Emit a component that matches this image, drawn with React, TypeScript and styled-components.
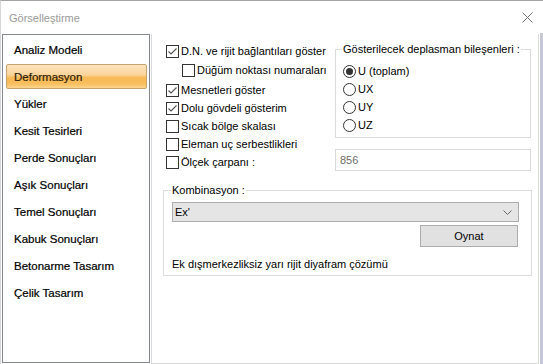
import React from 'react';
import styled, { createGlobalStyle, css } from 'styled-components';

const GlobalStyle = createGlobalStyle`
    html, body {
        margin: 0;
        padding: 0;
        background: #fff;
    }
    body {
        font-family: "Liberation Sans", Arial, sans-serif;
        font-size: 11px;
        color: #000;
    }
`

const Window = styled.div`
    width: 543px;
    height: 364px;
    box-sizing: border-box;
    border-top: 1px solid #a3a3a3;
    border-left: 1px solid #d6d6d6;
    display: flex;
    flex-direction: column;
    background: #fff;
    overflow: hidden;
`

const TitleBar = styled.div`
    height: 33px;
    flex-shrink: 0;
    display: flex;
    align-items: center;
    justify-content: space-between;
    padding: 0 10px 0 8px;
    color: #9a9a9a;
    font-size: 11px;
`

const Body = styled.div`
    display: flex;
    flex: 1;
    padding-left: 1px;
`

const Sidebar = styled.ul`
    list-style: none;
    margin: 0;
    width: 148px;
    height: 329px;
    box-sizing: border-box;
    border: 1px solid #828790;
    padding: 2px 2px 0 3px;
`

const NavItem = styled.li<{ $active?: boolean }>`
    height: 25px;
    margin-bottom: 2px;
    box-sizing: border-box;
    border: 1px solid transparent;
    border-radius: 2px;
    padding-left: 7px;
    display: flex;
    align-items: center;
    font-size: 11.5px;
    color: #000;
    -webkit-text-stroke: 0.2px #000;
    ${p => p.$active && css`
        border-color: #c4a36f;
        background: linear-gradient(#fde4bd 0%, #fbd49c 42%, #f8b955 56%, #f9be5e 82%, #fcd68f 100%);
        color: #3a2a10;
    `}
`

const Panel = styled.div`
    width: 388px;
    height: 330px;
    margin-left: 1px;
    box-sizing: border-box;
    border: 1px solid #dadada;
    border-top: none;
    padding: 0 6px 0 11px;
`

const EdgeStrip = styled.div`
    width: 3px;
    margin-left: 1px;
    margin-top: -1px;
    background: #c6c8d4;
`

const TopSection = styled.div`
    display: flex;
`

const CheckColumn = styled.div`
    width: 169px;
    margin-left: 3px;
    padding-top: 8px;
    display: flex;
    flex-direction: column;
`

const RightColumn = styled.div`
    width: 196px;
    padding-top: 7px;
`

const OptionRow = styled.label<{ $indent?: number }>`
    height: 18px;
    display: flex;
    align-items: center;
    gap: 2px;
    padding-left: ${p => p.$indent || 0}px;
    white-space: nowrap;
`

const Box = styled.span`
    width: 13px;
    height: 13px;
    box-sizing: border-box;
    border: 1px solid #333;
    background: #fff;
    display: flex;
    align-items: center;
    justify-content: center;
    flex-shrink: 0;
`

const Round = styled(Box)`
    border-radius: 50%;
`

const Dot = styled.span`
    width: 7px;
    height: 7px;
    border-radius: 50%;
    background: #333;
`

const GroupBox = styled.fieldset<{ $width: number }>`
    margin: 0;
    width: ${p => p.$width}px;
    box-sizing: border-box;
    border: 1px solid #dcdcdc;
    min-width: 0;
`

const Legend = styled.legend`
    padding: 0 1px;
    margin-left: -1px;
    line-height: 16px;
`

const RadioGroup = styled(GroupBox)`
    padding: 5px 0 3px 7px;
`

const ScaleInput = styled.input`
    display: block;
    margin: 11px 0 0;
    width: 196px;
    height: 22px;
    box-sizing: border-box;
    border: 1px solid #d9d9d9;
    padding: 0 4px;
    font: inherit;
    color: #6d6d6d;
    background: #fff;
    outline: none;
`

const ComboGroup = styled(GroupBox)`
    margin-top: 11px;
    padding: 4px 12px 3px 8px;
`

const GroupInner = styled.div`
    display: flex;
    flex-direction: column;
`

const ComboBox = styled.div`
    height: 20px;
    box-sizing: border-box;
    border: 1px solid #adadad;
    background: #e5e5e5;
    display: flex;
    align-items: center;
    justify-content: space-between;
    padding: 0 6px 0 2px;
`

const PlayButton = styled.button`
    align-self: flex-end;
    margin: 3px 1px 0 0;
    width: 98px;
    height: 22px;
    box-sizing: border-box;
    border: 1px solid #adadad;
    background: #e1e1e1;
    font: inherit;
    color: #000;
    padding: 0;
`

const Note = styled.div`
    margin-top: 9px;
    line-height: 16px;
`

const CheckBox = ({ checked }: { checked?: boolean }) => (
    <Box>
        {checked
        ? <svg width="11" height="11" viewBox="0 0 11 11">
            <path d="M1.5 5.5 L4 8 L9.5 2.5" fill="none" stroke="#555" strokeWidth="1.1" />
        </svg>
        : null}
    </Box>
)

const Radio = ({ checked }: { checked?: boolean }) => (
    <Round>{checked ? <Dot /> : null}</Round>
)

const navItems = [
    'Analiz Modeli', 'Deformasyon', 'Yükler', 'Kesit Tesirleri', 'Perde Sonuçları',
    'Aşık Sonuçları', 'Temel Sonuçları', 'Kabuk Sonuçları', 'Betonarme Tasarım', 'Çelik Tasarım',
]

const App = () => {
    return (
        <>
            <GlobalStyle />
            <Window>
                <TitleBar>
                    <span>Görselleştirme</span>
                    <svg width="11" height="11" viewBox="0 0 11 11">
                        <path d="M0.5 0.5 L10.5 10.5 M10.5 0.5 L0.5 10.5" stroke="#777" strokeWidth="1" />
                    </svg>
                </TitleBar>
                <Body>
                    <Sidebar>
                        {navItems.map(item => (
                            <NavItem key={item} $active={item === 'Deformasyon'}>{item}</NavItem>
                        ))}
                    </Sidebar>
                    <Panel>
                        <TopSection>
                            <CheckColumn>
                                <OptionRow><CheckBox checked />D.N. ve rijit bağlantıları göster</OptionRow>
                                <OptionRow $indent={16} style={{ margin: '1px 0 2px' }}><CheckBox />Düğüm noktası numaraları</OptionRow>
                                <OptionRow><CheckBox checked />Mesnetleri göster</OptionRow>
                                <OptionRow><CheckBox checked />Dolu gövdeli gösterim</OptionRow>
                                <OptionRow><CheckBox />Sıcak bölge skalası</OptionRow>
                                <OptionRow><CheckBox />Eleman uç serbestlikleri</OptionRow>
                                <OptionRow><CheckBox />Ölçek çarpanı :</OptionRow>
                            </CheckColumn>
                            <RightColumn>
                                <RadioGroup $width={196}>
                                    <Legend>Gösterilecek deplasman bileşenleri :</Legend>
                                    <OptionRow><Radio checked />U (toplam)</OptionRow>
                                    <OptionRow><Radio />UX</OptionRow>
                                    <OptionRow><Radio />UY</OptionRow>
                                    <OptionRow><Radio />UZ</OptionRow>
                                </RadioGroup>
                                <ScaleInput defaultValue="856" readOnly />
                            </RightColumn>
                        </TopSection>
                        <ComboGroup $width={369}>
                            <Legend>Kombinasyon :</Legend>
                            <GroupInner>
                                <ComboBox>
                                    <span>Ex'</span>
                                    <svg width="9" height="5" viewBox="0 0 9 5">
                                        <path d="M0.5 0.5 L4.5 4.5 L8.5 0.5" fill="none" stroke="#666" strokeWidth="1" />
                                    </svg>
                                </ComboBox>
                                <PlayButton>Oynat</PlayButton>
                                <Note>Ek dışmerkezliksiz yarı rijit diyafram çözümü</Note>
                            </GroupInner>
                        </ComboGroup>
                    </Panel>
                    <EdgeStrip />
                </Body>
            </Window>
        </>
    )
}

export default App
